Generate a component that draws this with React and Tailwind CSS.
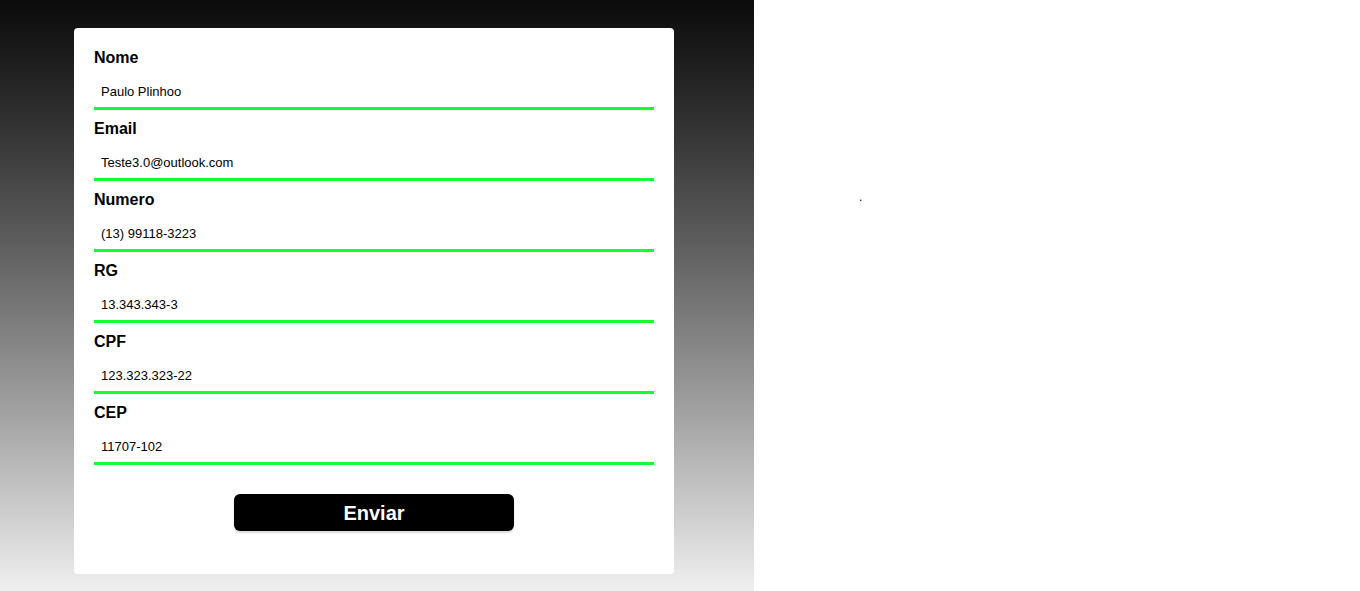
const fields = [
  { label: "Nome", value: "Paulo Plinhoo" },
  { label: "Email", value: "Teste3.0@outlook.com" },
  { label: "Numero", value: "(13) 99118-3223" },
  { label: "RG", value: "13.343.343-3" },
  { label: "CPF", value: "123.323.323-22" },
  { label: "CEP", value: "11707-102" },
]

function Field({ label, value }) {
  return (
    <div className="mb-[10px]">
      <label className="block h-[18px] text-[16px] leading-[18px] font-bold text-black">{label}</label>
      <input
        readOnly
        value={value}
        className="mt-[9px] block h-[34px] w-full border-b-[3px] border-[#11ff33] bg-white pl-[7px] text-[13px] text-black outline-none"
      />
    </div>
  )
}

export default function App() {
  return (
    <div className="flex h-[591px] w-[1360px] font-['Liberation_Sans',Arial,sans-serif]">
      <div className="h-full w-[754px] bg-gradient-to-b from-[#0b0b0b] to-[#f0f0f0] pt-[28px] pl-[74px]">
        <form className="flex h-[546px] w-[600px] flex-col rounded-[4px] bg-white px-[20px] pt-[21px]">
          {fields.map((f) => (
            <Field key={f.label} label={f.label} value={f.value} />
          ))}
          <button
            type="button"
            className="mx-auto mt-[19px] h-[37px] w-[280px] rounded-[6px] bg-black text-[20px] font-bold text-white shadow-[0_2px_2px_rgba(0,0,0,0.15)]"
          >
            Enviar
          </button>
        </form>
      </div>
      <div className="flex-1 bg-white pl-[105px] pt-[188px] text-[12px] text-black">.</div>
    </div>
  )
}
